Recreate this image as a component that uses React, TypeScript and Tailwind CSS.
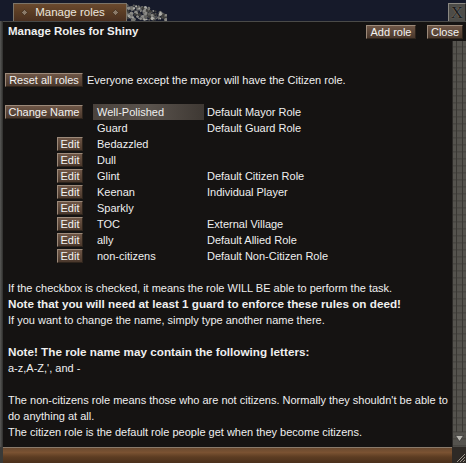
import React from "react";

const font = { fontFamily: '"Liberation Sans", Arial, sans-serif' };

function Btn({ children, className = "" }: { children: React.ReactNode; className?: string }) {
  return (
    <div
      className={
        "h-[14px] flex items-center justify-center whitespace-nowrap text-[11px] leading-none text-[#f2f2f2] bg-gradient-to-b from-[#6e5646] to-[#4a382c] border border-t-[#9c8a7a] border-l-[#9c8a7a] border-r-[#2e241c] border-b-[#2e241c] " +
        className
      }
    >
      {children}
    </div>
  );
}

const rows: { name: string; desc: string; btn: "change" | "edit" | "none"; hl?: boolean }[] = [
  { name: "Well-Polished", desc: "Default Mayor Role", btn: "change", hl: true },
  { name: "Guard", desc: "Default Guard Role", btn: "none" },
  { name: "Bedazzled", desc: "", btn: "edit" },
  { name: "Dull", desc: "", btn: "edit" },
  { name: "Glint", desc: "Default Citizen Role", btn: "edit" },
  { name: "Keenan", desc: "Individual Player", btn: "edit" },
  { name: "Sparkly", desc: "", btn: "edit" },
  { name: "TOC", desc: "External Village", btn: "edit" },
  { name: "ally", desc: "Default Allied Role", btn: "edit" },
  { name: "non-citizens", desc: "Default Non-Citizen Role", btn: "edit" },
];

function Gravel() {
  const dots: React.ReactNode[] = [];
  let s = 7;
  const rnd = () => {
    s = (s * 9301 + 49297) % 233280;
    return s / 233280;
  };
  for (let i = 0; i < 160; i++) {
    const x = rnd() * 40;
    const h = 15 * (1 - (x / 48) * (x / 48));
    const y = rnd() * h;
    const r = 0.6 + rnd() * 1.2;
    const c = ["#8a8a86", "#5d5d5a", "#b0b0aa", "#3f3f3c", "#747470"][Math.floor(rnd() * 5)];
    dots.push(<circle key={i} cx={x} cy={17 - y} r={r} fill={c} />);
  }
  return (
    <svg width="40" height="18" viewBox="0 0 40 18" className="mt-[3px]">
      {dots}
    </svg>
  );
}

function Diamond() {
  return (
    <svg width="7" height="7" viewBox="0 0 7 7">
      <path d="M3.5 0.5 L6.5 3.5 L3.5 6.5 L0.5 3.5 Z" fill="#8c7a68" stroke="#3e2c1e" strokeWidth="0.7" />
    </svg>
  );
}

export default function App() {
  return (
    <div style={font} className="w-[466px] h-[463px] bg-[#161a2a] flex flex-col overflow-hidden text-[11px] text-[#efefef]">
      {/* top bar */}
      <div className="h-[21px] flex items-end">
        <div className="ml-[13px] w-[114px] h-[18px] flex items-center justify-between px-[7px] bg-gradient-to-b from-[#6b4a2e] via-[#5a3c24] to-[#4a3020] border border-b-0 border-[#7c7468]">
          <Diamond />
          <span className="text-[11.5px] text-[#ece6de] leading-none">Manage roles</span>
          <Diamond />
        </div>
        <div className="self-start">
          <Gravel />
        </div>
        <div className="flex-1" />
        <div className="self-start mt-[3px] w-[18px] h-[19px] bg-[#4d4c48] border border-t-[#8a8882] border-l-[#8a8882] border-r-[#2a2a28] border-b-[#2a2a28] flex items-center justify-center">
          <span style={{ fontFamily: '"Liberation Serif", serif' }} className="text-[17px] leading-none text-[#1c1c1a] [text-shadow:0_0_1px_#9a9892]">
            X
          </span>
        </div>
      </div>

      {/* main area */}
      <div className="flex-1 flex">
        <div className="w-[3px] bg-gradient-to-r from-[#5a5a58] to-[#2e2e2c]" />
        <div className="flex-1 flex flex-col bg-[#151312] border-t border-[#4a4a48]">
          {/* header */}
          <div className="h-[18px] mt-[1px] flex items-center pr-[3px]">
            <span className="ml-[5px] font-bold text-[11.5px]">Manage Roles for Shiny</span>
            <div className="flex-1" />
            <Btn className="w-[50px] text-[11.5px]">Add role</Btn>
            <Btn className="w-[36px] ml-[11px] text-[11.5px]">Close</Btn>
          </div>
          <div className="flex-1 flex">
            <div className="flex-1 flex flex-col">
              {/* reset row */}
              <div className="mt-[31px] h-[16px] flex items-center">
                <Btn className="ml-[2px] w-[78px] text-[11.5px]">Reset all roles</Btn>
                <span className="ml-[4px]">Everyone except the mayor will have the Citizen role.</span>
              </div>
              {/* rows */}
              <div className="mt-[16px] flex flex-col">
                {rows.map((r) => (
                  <div key={r.name} className="h-[16px] flex items-center">
                    <div className="w-[80px] flex justify-end">
                      {r.btn === "change" && <Btn className="w-[78px] text-[11px]">Change Name</Btn>}
                      {r.btn === "edit" && <Btn className="w-[26px] text-[11.5px]">Edit</Btn>}
                    </div>
                    <div
                      className={
                        "ml-[10px] w-[111px] h-[16px] flex items-center pl-[4px] text-[11px] " +
                        (r.hl ? "bg-gradient-to-r from-[#4a423c] via-[#5a534d] to-[#3e3833]" : "")
                      }
                    >
                      {r.name}
                    </div>
                    <div className="ml-[3px] text-[11px]">{r.desc}</div>
                  </div>
                ))}
              </div>
              {/* notes */}
              <div className="mt-[16px] pl-[5px] flex flex-col text-[11px] leading-[16px]">
                <div>If the checkbox is checked, it means the role WILL BE able to perform the task.</div>
                <div className="font-bold text-[11.7px]">Note that you will need at least 1 guard to enforce these rules on deed!</div>
                <div>If you want to change the name, simply type another name there.</div>
                <div className="h-[16px]" />
                <div className="font-bold text-[11.7px]">Note! The role name may contain the following letters:</div>
                <div>a-z,A-Z,', and -</div>
                <div className="h-[16px]" />
                <div className="whitespace-nowrap">The non-citizens role means those who are not citizens. Normally they shouldn't be able to</div>
                <div>do anything at all.</div>
                <div>The citizen role is the default role people get when they become citizens.</div>
              </div>
            </div>
            {/* scrollbar */}
            <div className="w-[14px] flex flex-col border-l border-[#2c2a28] bg-[repeating-linear-gradient(180deg,#55534e_0px,#55534e_5px,#3e3c38_6px,#5e5c57_7px)]">
              <div className="flex-1 mx-[3px] border-x border-[#3a3834]" />
              <div className="h-[12px] mb-[3px] flex items-center justify-center">
                <svg width="9" height="7" viewBox="0 0 9 7">
                  <path d="M0.5 0.5 L8.5 0.5 L4.5 6.5 Z" fill="#b8b6b0" stroke="#2a2a28" strokeWidth="0.6" />
                </svg>
              </div>
            </div>
          </div>
        </div>
      </div>

      {/* bottom bar */}
      <div className="h-[16px] flex">
        <div className="w-[3px] bg-[#3a3a38]" />
        <div className="flex-1 border-t border-[#8a7a6a] bg-[linear-gradient(180deg,#6a4a30_0%,#7a5232_30%,#5c3c22_60%,#4a301c_100%)]" />
        <div className="w-[14px] bg-[#2e2a26] flex items-end justify-end">
          <svg width="12" height="12" viewBox="0 0 12 12">
            <path d="M11 3 L3 11 M11 6 L6 11 M11 9 L9 11" stroke="#9a948a" strokeWidth="1" />
          </svg>
        </div>
      </div>
    </div>
  );
}
